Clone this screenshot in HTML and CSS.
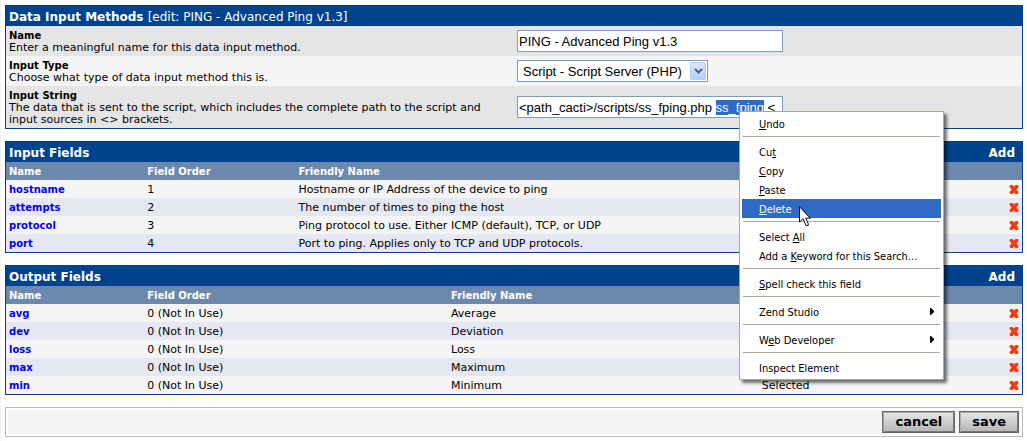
FILE: index.html
```
<!DOCTYPE html>
<html lang="en">
<head>
<meta charset="utf-8">
<title>Data Input Methods</title>
<link rel="stylesheet" href="styles.css">
</head>
<body>
<svg class="defs" aria-hidden="true">
  <symbol id="cross" viewBox="0 0 10 9"><path d="M1 0h2.500L5 1.500 6.500 0H9l.5 2L7.500 4.500 9.500 7 9 9H6.500L5 7.500 3.500 9H1L.5 7l2-2.500L.5 2z"/></symbol>
</svg>
<main class="page">
  <form class="panel">
    <header class="panel-head"><h2>Data Input Methods <span class="sub">[edit: PING - Advanced Ping v1.3]</span></h2></header>
    <div class="field">
      <label for="name"><b>Name</b><span>Enter a meaningful name for this data input method.</span></label>
      <div class="control"><input class="text" id="name" type="text" value="PING - Advanced Ping v1.3"></div>
    </div>
    <div class="field alt">
      <label for="type"><b>Input Type</b><span>Choose what type of data input method this is.</span></label>
      <div class="control select-wrap">
        <select id="type"><option>Script - Script Server (PHP)</option></select>
        <span class="arrow"><svg width="9" height="6" viewBox="0 0 9 6"><path d="M1 1l3.500 3.500L8 1" fill="none" stroke="#4d6185" stroke-width="2"/></svg></span>
      </div>
    </div>
    <div class="field">
      <label for="string"><b>Input String</b><span>The data that is sent to the script, which includes the complete path to the script and input sources in &lt;&gt; brackets.</span></label>
      <div class="control"><input class="text" id="string" type="text" value="&lt;path_cacti&gt;/scripts/ss_fping.php ss_fping &lt;"></div>
    </div>
  </form>

  <section class="panel">
    <header class="panel-head"><h2>Input Fields</h2><a href="#">Add</a></header>
    <table>
      <colgroup><col class="c-name"><col class="c-order"><col><col class="c-del"></colgroup>
      <thead><tr><th>Name</th><th>Field Order</th><th>Friendly Name</th><th></th></tr></thead>
      <tbody>
        <tr><td><a href="#">hostname</a></td><td>1</td><td>Hostname or IP Address of the device to ping</td><td><button class="del" aria-label="Delete"><svg><use href="#cross"/></svg></button></td></tr>
        <tr><td><a href="#">attempts</a></td><td>2</td><td>The number of times to ping the host</td><td><button class="del" aria-label="Delete"><svg><use href="#cross"/></svg></button></td></tr>
        <tr><td><a href="#">protocol</a></td><td>3</td><td>Ping protocol to use. Either ICMP (default), TCP, or UDP</td><td><button class="del" aria-label="Delete"><svg><use href="#cross"/></svg></button></td></tr>
        <tr><td><a href="#">port</a></td><td>4</td><td>Port to ping. Applies only to TCP and UDP protocols.</td><td><button class="del" aria-label="Delete"><svg><use href="#cross"/></svg></button></td></tr>
      </tbody>
    </table>
  </section>

  <section class="panel">
    <header class="panel-head"><h2>Output Fields</h2><a href="#">Add</a></header>
    <table>
      <colgroup><col class="c-name"><col class="c-half"><col class="c-wide"><col><col class="c-del"></colgroup>
      <thead><tr><th>Name</th><th>Field Order</th><th>Friendly Name</th><th></th><th></th></tr></thead>
      <tbody>
        <tr><td><a href="#">avg</a></td><td>0 (Not In Use)</td><td>Average</td><td></td><td><button class="del" aria-label="Delete"><svg><use href="#cross"/></svg></button></td></tr>
        <tr><td><a href="#">dev</a></td><td>0 (Not In Use)</td><td>Deviation</td><td></td><td><button class="del" aria-label="Delete"><svg><use href="#cross"/></svg></button></td></tr>
        <tr><td><a href="#">loss</a></td><td>0 (Not In Use)</td><td>Loss</td><td></td><td><button class="del" aria-label="Delete"><svg><use href="#cross"/></svg></button></td></tr>
        <tr><td><a href="#">max</a></td><td>0 (Not In Use)</td><td>Maximum</td><td></td><td><button class="del" aria-label="Delete"><svg><use href="#cross"/></svg></button></td></tr>
        <tr><td><a href="#">min</a></td><td>0 (Not In Use)</td><td>Minimum</td><td>Selected</td><td><button class="del" aria-label="Delete"><svg><use href="#cross"/></svg></button></td></tr>
      </tbody>
    </table>
  </section>

  <footer class="actions"><div class="actions-in"><button class="btn">cancel</button><button class="btn">save</button></div></footer>
</main>

<div class="menu" role="menu">
  <button role="menuitem"><span><u>U</u>ndo</span></button>
  <hr>
  <button role="menuitem"><span>Cu<u>t</u></span></button>
  <button role="menuitem"><span><u>C</u>opy</span></button>
  <button role="menuitem"><span><u>P</u>aste</span></button>
  <button role="menuitem" class="active"><span><u>D</u>elete</span></button>
  <hr>
  <button role="menuitem"><span>Select <u>A</u>ll</span></button>
  <button role="menuitem"><span>Add a <u>K</u>eyword for this Search…</span></button>
  <hr>
  <button role="menuitem"><span><u>S</u>pell check this field</span></button>
  <hr>
  <button role="menuitem"><span>Zend Studio</span><svg class="more" viewBox="0 0 4 7"><path d="M0 0h1l3 3v1L1 7H0z"/></svg></button>
  <hr>
  <button role="menuitem"><span>W<u>e</u>b Developer</span><svg class="more" viewBox="0 0 4 7"><path d="M0 0h1l3 3v1L1 7H0z"/></svg></button>
  <hr>
  <button role="menuitem"><span>Inspect Element</span></button>
</div>
<svg class="pointer" width="12" height="21" viewBox="0 0 12 21" aria-hidden="true"><path d="M.5.800v15.400l3.500-3.500 3 6.800h2.200V17.500l-2.400-5.300h4.500z" fill="#fff" stroke="#000"/></svg>
<script src="select.js"></script>
</body>
</html>
```
FILE: styles.css
```
* { box-sizing: border-box; }
body {
  margin: 0;
  border-left: 1px solid #f4f4f4;
  background: #fff;
  color: #000;
  font: 11px/12px Verdana, "DejaVu Sans", sans-serif;
}
.defs { position: absolute; width: 0; height: 0; }
.page {
  display: flex;
  flex-direction: column;
  gap: 12px;
  padding: 5px 4px 4px;
}
.panel { border: 1px solid #00438c; background: #f5f5f5; }
.panel-head {
  display: flex;
  justify-content: space-between;
  align-items: center;
  height: 20px;
  padding: 2px 7px 0 3px;
  background: #00438c;
  color: #fff;
}
.panel-head h2, .panel-head a {
  margin: 0;
  color: #fff;
  font-size: 12px;
  line-height: 16px;
  font-weight: bold;
  text-decoration: none;
}
.panel-head .sub { font-weight: normal; }
.field {
  display: grid;
  grid-template-columns: 1fr 1fr;
  align-items: center;
  gap: 6px;
  padding: 4px 3px 2px;
  background: #e5e5e5;
}
.field.alt { background: #f5f5f5; }
.field label b, .field label span { display: block; }
.field label b { font-size: 10px; }
.control { margin-bottom: 2px; }
.text, select {
  display: block;
  height: 22px;
  margin: 0;
  border: 1px solid #7f9db9;
  border-radius: 0;
  background: #fff;
  color: #000;
  font: 13px/18px Arial, "Liberation Sans", sans-serif;
  outline: none;
}
.text { width: 266px; padding: 0 1px; }
.text::selection { background: #316ac5; color: #fff; }
.select-wrap { position: relative; width: 191px; }
select { width: 100%; padding: 1px 20px 0 5px; appearance: none; }
.arrow {
  position: absolute;
  top: 2px;
  right: 2px;
  display: grid;
  place-items: center;
  width: 16px;
  height: 18px;
  border: 1px solid #b6cbf7;
  border-radius: 2px;
  background: linear-gradient(#dce7fe, #b5ccfb);
  pointer-events: none;
}
table { width: 100%; border-collapse: collapse; table-layout: fixed; }
.c-name { width: 13.6%; }
.c-order { width: 14.9%; }
.c-half { width: 29.9%; }
.c-wide { width: 30.6%; }
.c-del { width: 16px; }
th, td { height: 18px; padding: 1px 3px 0; text-align: left; white-space: nowrap; }
th { background: #6d88ad; color: #fff; font-size: 10px; }
tbody tr:nth-child(even) { background: #e5e7f2; }
td a { color: #00f; font-size: 10px; font-weight: bold; text-decoration: none; }
.del { display: block; width: 10px; height: 9px; padding: 0; border: 0; background: none; }
.del svg { display: block; width: 10px; height: 9px; fill: #f73c0c; }
.actions { padding: 2px; border: 1px solid #bbb; }
.actions-in {
  display: flex;
  justify-content: flex-end;
  gap: 4px;
  padding: 1px;
  background: #f5f5f5;
}
.btn {
  height: 22px;
  padding: 0 12px;
  border: 1px solid #666;
  background: linear-gradient(#e8e8e8, #b4b4b4);
  box-shadow: inset 1px 1px #aaa, inset -1px -1px #777;
  color: #000;
  font: bold 13px/16px Verdana, "DejaVu Sans", sans-serif;
}
.menu {
  position: absolute;
  top: 111px;
  left: 739px;
  width: 205px;
  padding: 2px;
  border: 1px solid #aca899;
  background: #fff;
  box-shadow: 3px 3px 3px rgba(0, 0, 0, .55);
}
.menu button {
  display: flex;
  justify-content: space-between;
  align-items: center;
  width: 100%;
  height: 19px;
  padding: 2px 7px 0 17px;
  border: 0;
  background: none;
  color: #000;
  font: 11px/14px Tahoma, "DejaVu Sans Condensed", sans-serif;
}
.menu .active { background: #316ac5; color: #fff; }
.menu .more { width: 4px; height: 7px; margin-bottom: 3px; }
.menu hr { height: 1px; margin: 3px 1px 5px; border: 0; background: #aca899; }
.pointer { position: absolute; top: 206px; left: 799px; }
```
FILE: select.js
```
const field = document.getElementById("string");
const start = field.value.lastIndexOf("ss_fping");
field.focus();
field.setSelectionRange(start, start + "ss_fping".length);
```
